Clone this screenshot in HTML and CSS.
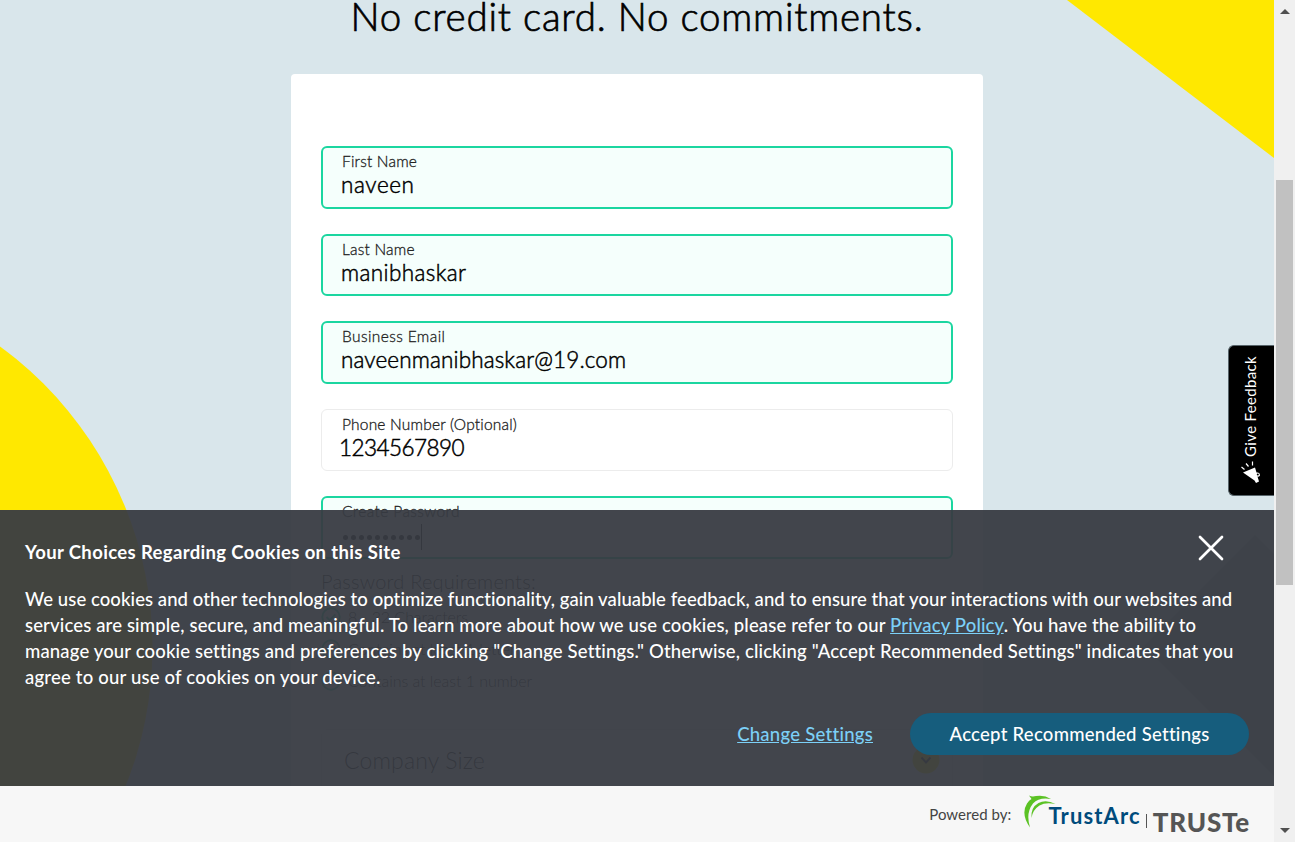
FILE: index.html
```html
<!DOCTYPE html>
<html lang="en">
<head>
<meta charset="utf-8">
<title>Free trial</title>
<link rel="stylesheet" href="styles.css">
</head>
<body>
<div class="window">
  <main class="page">
    <svg class="backdrop" viewBox="0 0 1274 842" width="1274" height="842" aria-hidden="true">
      <path d="M1067 0H1274V158Z" fill="#ffe800"/>
      <circle cx="-220" cy="647" r="372.500" fill="#ffe800"/>
      <path d="M1255 535L1144 646L1274 776V554Z" fill="#a9bcc7"/>
    </svg>
    <h1 class="title">No credit card. No commitments.</h1>
    <form class="card">
      <div class="field valid"><label>First Name</label><div class="value first">naveen</div></div>
      <div class="field valid"><label>Last Name</label><div class="value last">manibhaskar</div></div>
      <div class="field valid"><label class="wide">Business Email</label><div class="value">naveenmanibhaskar@19.com</div></div>
      <div class="field"><label>Phone Number (Optional)</label><div class="value phone">1234567890</div></div>
      <div class="field valid"><label class="wide">Create Password</label><div class="dots"><i></i><i></i><i></i><i></i><i></i><i></i><i></i><i></i><i></i><i></i><b></b></div></div>
      <div class="rules">
        <h2>Password Requirements:</h2>
        <p><svg width="20" height="20" viewBox="0 0 20 20"><circle cx="10" cy="10" r="8.7"/><path d="M5.5 10l3.2 3.2 5.6-5.8"/></svg><span>8 - 32 Characters</span></p>
        <p><svg width="20" height="20" viewBox="0 0 20 20"><circle cx="10" cy="10" r="8.7"/><path d="M5.5 10l3.2 3.2 5.6-5.8"/></svg><span>Contains at least 1 letter</span></p>
        <p><svg width="20" height="20" viewBox="0 0 20 20"><circle cx="10" cy="10" r="8.7"/><path d="M5.5 10l3.2 3.2 5.6-5.8"/></svg><span>Contains at least 1 number</span></p>
      </div>
      <div class="select"><span>Company Size</span><svg width="28" height="28" viewBox="0 0 28 28"><circle cx="14" cy="14" r="13.5" fill="#ffe800"/><path d="M9.500 11.500l4.500 5 4.500-5" fill="none" stroke="#222" stroke-width="2"/></svg></div>
    </form>
    <div class="feedback">
      <span class="feedback-label">Give Feedback</span>
      <svg width="22" height="22" viewBox="0 0 22 22"><path d="M3 11.500L15 6.500L16.500 11.500Q20 11 20 14.500Q19.500 16 17.500 15.500L19 20.500L16 22L14.500 19.500Z" fill="#fff"/><circle cx="17.800" cy="13.600" r="1" fill="#000"/><path d="M1.500 6L4.500 8.500M6 2.500L8.500 5.500M12.500 0.500V4.500" stroke="#fff" stroke-width="1.200"/></svg>
    </div>
    <section class="consent">
      <div class="consent-body">
        <div class="consent-head"><strong>Your Choices Regarding Cookies on this Site</strong>
          <svg width="26" height="26" viewBox="0 0 26 26"><path d="M2 2L24 24M24 2L2 24" stroke="#fff" stroke-width="2.700" stroke-linecap="round"/></svg>
        </div>
        <p class="copy">
          <span class="l1">We use cookies and other technologies to optimize functionality, gain valuable feedback, and to ensure that your interactions with our websites and</span>
          <span class="l2">services are simple, secure, and meaningful. To learn more about how we use cookies, please refer to our <a>Privacy Policy</a>. You have the ability to</span>
          <span class="l3">manage your cookie settings and preferences by clicking "Change Settings." Otherwise, clicking "Accept Recommended Settings" indicates that you</span>
          <span class="l4">agree to our use of cookies on your device.</span>
        </p>
        <div class="actions"><a>Change Settings</a><div class="accept">Accept Recommended Settings</div></div>
      </div>
      <footer class="powered">
        <span class="by">Powered by:</span>
        <svg class="arc" width="32" height="34" viewBox="0 0 32 34"><path d="M5 0.500Q8 2 12 1Q20 -0.500 27 4Q15 2 9 8.500Q1.500 18 6 32.500Q-3.500 19 3 8.500Q5 5 7.500 4Z" fill="#5bc224"/><path d="M7.500 23Q6.500 12.500 14.500 8Q22 4 31.500 9Q21.500 7 15.500 10.500Q8.500 15 7.500 23Z" fill="#5bc224"/></svg>
        <span class="trustarc">TrustArc</span><span class="bar"></span><span class="truste">TRUSTe</span>
      </footer>
    </section>
  </main>
  <div class="scrollbar"><i class="up"></i><i class="thumb"></i><i class="down"></i></div>
</div>
</body>
</html>
```
FILE: styles.css
```css
* { box-sizing: border-box; }
body { margin: 0; font-family: Lato, "Open Sans", sans-serif; color: #000; font-variant-ligatures: none; }
svg { display: block; flex: none; }
h1, h2, p { margin: 0; font-weight: 300; }
.window { display: flex; width: 1295px; height: 842px; overflow: hidden; }
.page { position: relative; width: 1274px; height: 842px; overflow: hidden; background: #d9e6eb; }
.backdrop { position: absolute; left: 0; top: 0; }
.title { position: relative; height: 74px; text-align: center; font-size: 38.5px; line-height: 33px; letter-spacing: .79px; white-space: nowrap; -webkit-text-stroke: .7px #000; }
.card { position: relative; display: flex; flex-direction: column; width: 692px; height: 900px; margin: 0 auto; padding: 72px 30px 0; background: #fff; border-radius: 4px; }
.field { height: 62.5px; margin-bottom: 25px; padding: 6px 19px 0; border: 1px solid #ececec; border-radius: 6px; }
.field.valid { padding: 5px 18px 0; border: 2px solid #1bd6a0; background: #f5fffc; }
label { display: block; padding-left: 1px; font-size: 15.5px; line-height: 16px; letter-spacing: .2px; color: #222; font-weight: 300; -webkit-text-stroke: .3px #222; }
label.wide { letter-spacing: .4px; }
.value { font-size: 22.5px; line-height: 32px; font-weight: 300; letter-spacing: .13px; -webkit-text-stroke: .5px #000; }
.value.first { letter-spacing: .6px; }
.value.last { letter-spacing: .38px; }
.value.phone { margin-left: -2px; letter-spacing: -.55px; }
.dots { display: flex; align-items: center; gap: 3px; height: 36px; padding-left: 2px; }
.dots i { width: 5px; height: 5px; border-radius: 50%; background: #000; }
.dots b { width: 1px; height: 26px; margin-left: -2px; background: #000; }
.rules { margin-top: -15px; }
.rules h2 { margin-bottom: 8px; font-size: 20px; line-height: 24px; letter-spacing: .22px; }
.rules p { display: flex; align-items: center; gap: 7px; height: 32px; font-size: 16px; letter-spacing: -.06px; }
.rules circle, .rules path { fill: none; stroke: #1bd6a0; stroke-width: 2; }
.select { display: flex; align-items: center; justify-content: space-between; height: 62px; margin-top: 32px; padding: 0 12px 0 22px; border: 1px solid #ececec; border-radius: 6px; font-size: 23px; font-weight: 300; letter-spacing: .138px; }
.feedback { position: absolute; left: 1228px; top: 345px; width: 46px; height: 151px; display: flex; flex-direction: column; align-items: center; gap: 4px; padding: 10px 4px 0 0; background: #000; border: 1px solid #57646a; border-right: 0; border-radius: 6px 0 0 6px; color: #fff; }
.feedback-label { writing-mode: vertical-rl; transform: rotate(180deg); font-size: 15px; line-height: 20px; letter-spacing: .34px; }
.feedback svg { margin-left: 3px; }
.consent { position: absolute; left: 0; bottom: 0; width: 1274px; height: 332px; color: #fff; }
.consent-body { height: 276px; padding: 25px; background: rgba(56, 59, 66, .95); }
.consent-head { display: flex; justify-content: space-between; height: 50.5px; padding-right: 25px; font-size: 18.5px; line-height: 35px; letter-spacing: .36px; }
.copy { font-size: 18.5px; line-height: 26.3px; font-weight: 500; white-space: nowrap; }
.copy > span { display: table; }
.l1 { letter-spacing: .075px; }
.l2 { letter-spacing: .145px; }
.l3 { letter-spacing: .15px; }
.l4 { letter-spacing: .2px; }
a { color: #7cd0f7; text-decoration: underline; }
.actions { display: flex; justify-content: flex-end; align-items: center; gap: 37px; margin-top: 22.5px; font-size: 18.5px; font-weight: 500; letter-spacing: .26px; }
.accept { width: 339px; height: 42px; border-radius: 21px; background: #165d7d; text-align: center; line-height: 42px; }
.powered { display: flex; height: 56px; padding: 0 24px 0 25px; justify-content: flex-end; align-items: center; background: #f7f7f7; color: #444; }
.by { margin-bottom: 1px; font-size: 15px; letter-spacing: .05px; }
.arc { margin: -4px -8px 0 13px; }
.trustarc { margin-top: 3px; font-size: 22px; font-weight: 700; letter-spacing: 1.15px; color: #004b7c; }
.bar { width: 1px; height: 14px; margin: 14px 6px 0 5px; background: #555; }
.truste { margin-top: 16px; font-size: 26px; font-weight: 900; letter-spacing: .75px; color: #555; }
.scrollbar { position: relative; width: 21px; background: #f0f0f0; }
.thumb { position: absolute; left: 2px; top: 180px; width: 17px; height: 405px; background: #c1c1c1; }
.up, .down { position: absolute; left: 6px; border: 5px solid transparent; }
.up { top: 4px; border-bottom-color: #505050; }
.down { top: 828px; border-top-color: #505050; }
```
